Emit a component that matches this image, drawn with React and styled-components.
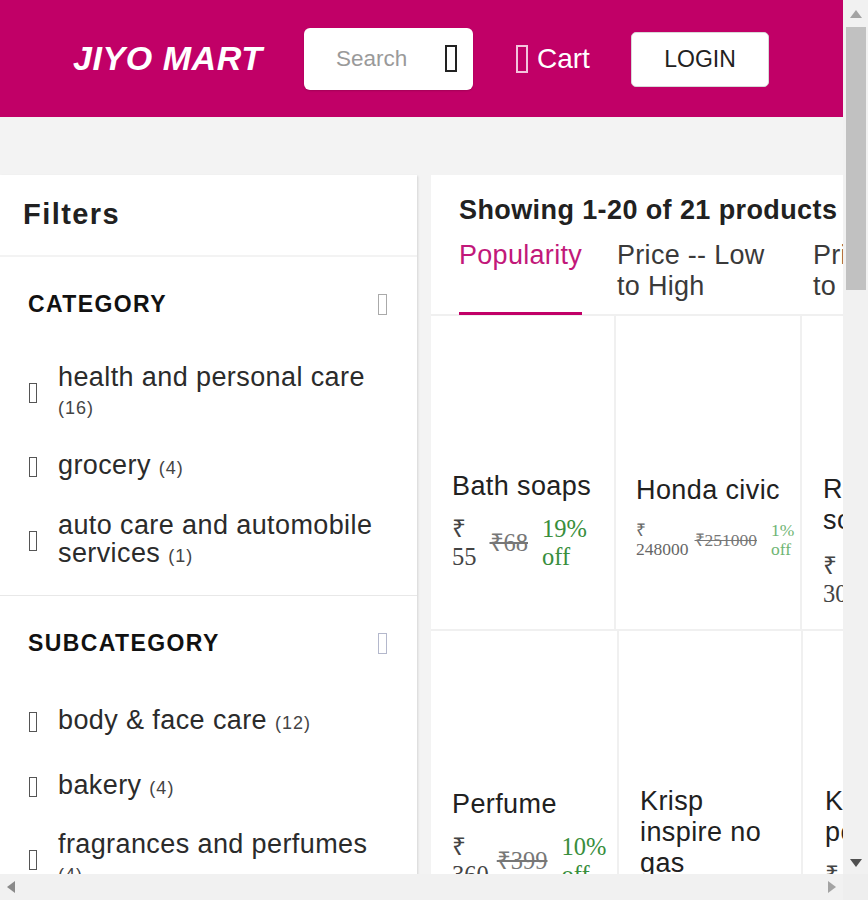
import React from "react";
import styled, { createGlobalStyle } from "styled-components";

const Global = createGlobalStyle`
  html, body { margin: 0; padding: 0; height: 100%; overflow: hidden; background: #f3f3f3; }
  * { box-sizing: border-box; }
  body { font-family: "Liberation Sans", Arial, sans-serif; color: #212121; }
`;

const Frame = styled.div`
  width: 868px; height: 900px;
  display: grid;
  grid-template-columns: 843px 25px;
  grid-template-rows: 874px 26px;
  overflow: hidden;
`;
const Viewport = styled.div`overflow: hidden; background: #f3f3f3;`;
const VBar = styled.div`
  background: #f1f1f1;
  display: flex; flex-direction: column; align-items: center;
  padding: 0 2px;
`;
const HBar = styled.div`
  background: #f1f1f1;
  display: flex; justify-content: space-between; align-items: center;
  padding: 0 7px;
`;
const Corner = styled.div`background: #eeeeee;`;
const Thumb = styled.div`
  width: 20px; height: 263px; background: #c1c1c1;
  margin-top: 9px;
`;
const ArrowBox = styled.svg`display: block; flex: none;`;
const ArrowSlot = styled.div`
  height: 18px; display: flex; align-items: flex-end; justify-content: center;
`;
const BottomSlot = styled.div`
  margin-top: auto; height: 22px; display: flex; align-items: center; justify-content: center;
`;

const Header = styled.header`
  height: 117px; background: #c10067;
  display: flex; align-items: center;
  padding: 0 0 0 73px;
`;
const Logo = styled.div`
  color: #fff; font-size: 34px; font-weight: 700; font-style: italic;
  letter-spacing: .55px;
  width: 231px; white-space: nowrap;
`;
const Search = styled.div`
  width: 169px; height: 62px; background: #fff; border-radius: 6px;
  display: flex; align-items: center; justify-content: space-between;
  padding: 0 16px 0 32px;
  margin-right: 43px;
  box-shadow: 0 1px 2px rgba(0,0,0,.15);
`;
const Placeholder = styled.span`color: #9a9a9a; font-size: 22.5px;`;
const Tofu = styled.span`
  display: block; flex: none;
  width: ${p => p.$w}px; height: ${p => p.$h}px;
  border: ${p => p.$b || 1}px solid ${p => p.$c};
`;
const CartLink = styled.div`
  display: flex; align-items: center; gap: 9px;
  color: #fff; font-size: 28px;
  width: 115px;
`;
const LoginButton = styled.div`
  width: 138px; height: 55px; background: #fff;
  border: 1px solid #d8d8d8; border-radius: 5px;
  display: flex; align-items: center; justify-content: center;
  font-size: 23px; color: #212121;
  margin-top: 1px;
`;

const Main = styled.div`
  display: flex; gap: 14px; padding-top: 58px;
  width: 1300px;
`;
const Sidebar = styled.aside`
  width: 417px; flex: none; height: 900px; background: #fff;
  box-shadow: 1px 1px 2px rgba(0,0,0,.12);
`;
const FilterTitle = styled.div`
  height: 82px; padding: 0 0 2px 23px;
  display: flex; align-items: center;
  font-size: 29px; font-weight: 700; letter-spacing: 1.45px;
  border-bottom: 2px solid #f3f3f3;
`;
const Section = styled.section`
  padding: 0 30px 0 28px;
  height: ${p => p.$h}px;
  border-bottom: 1px solid #e8e8e8;
`;
const SectionHead = styled.div`
  height: 94px;
  display: flex; align-items: center; justify-content: space-between;
  font-size: 23px; font-weight: 700; color: #111;
  letter-spacing: 1.4px;
`;
const Items = styled.div`
  display: flex; flex-direction: column; gap: 29px;
  padding: ${p => p.$top}px 0 0 1px;
`;
const Item = styled.div`
  display: flex; align-items: center; gap: 21px;
  margin-bottom: ${p => p.$extra || 0}px;
`;
const ItemText = styled.div`font-size: 27px; line-height: 28px; color: #2b2b2b; letter-spacing: .4px;`;
const Count = styled.span`font-size: 18px; color: #444; letter-spacing: 1px;`;

const Results = styled.div`width: 800px; flex: none; background: #fff;`;
const ResultsHead = styled.div`
  height: 141px; padding: 19px 0 0 28px;
  border-bottom: 2px solid #f0f0f0;
`;
const Showing = styled.div`
  font-size: 27px; font-weight: 700; line-height: 32px; color: #212121;
  letter-spacing: .4px; white-space: nowrap;
`;
const Tabs = styled.div`display: flex; gap: 35px; margin-top: 14px;`;
const Tab = styled.div`
  width: ${p => p.$w}px; height: 75px;
  font-size: 27px; line-height: 31px; letter-spacing: .3px;
  color: ${p => (p.$active ? "#c2187a" : "#3a3a3a")};
  border-bottom: 3px solid ${p => (p.$active ? "#c10067" : "transparent")};
`;
const Row = styled.div`
  display: flex; height: ${p => p.$h}px;
  border-bottom: 2px solid #f0f0f0;
`;
const Card = styled.div`
  width: ${p => p.$w}px; flex: none;
  padding: ${p => p.$top}px 6px 0 ${p => p.$left}px;
  border-right: 2px solid #f0f0f0;
`;
const Name = styled.div`
  font-size: 27px; line-height: 31px; color: #212121; letter-spacing: .4px;
`;
const Prices = styled.div`
  display: flex; align-items: center;
  margin-top: ${p => p.$mt}px;
  font-family: "Liberation Serif", "Times New Roman", serif;
  font-size: ${p => (p.$small ? 17.5 : 24.5)}px;
  line-height: ${p => (p.$small ? 19 : 28)}px;
`;
const Price = styled.span`
  width: min-content; color: ${p => (p.$small ? "#666" : "#444")};
  margin-right: ${p => p.$gap}px;
`;
const Old = styled.s`color: #777; white-space: nowrap; margin-right: 14px;`;
const Off = styled.span`width: min-content; color: ${p => (p.$small ? "#6fb573" : "#388e3c")};`;

const products = [
  [
    { w: 185, top: 155, left: 21, mt: 13, gap: 13, name: "Bath soaps", price: "₹ 55", old: "₹68", off: "19% off" },
    { w: 186, top: 159, left: 20, mt: 15, gap: 6, name: "Honda civic", price: "₹ 248000", old: "₹251000", off: "1% off", small: true },
    { w: 430, top: 158, left: 21, mt: 16, gap: 8, name: <>Rose<br />soap</>, price: "₹ 300" },
  ],
  [
    { w: 188, top: 158, left: 21, mt: 13, gap: 8, name: "Perfume", price: "₹ 360", old: "₹399", off: "10% off" },
    { w: 184, top: 155, left: 21, mt: 13, gap: 8, name: <>Krisp<br />inspire no<br />gas</>, price: "₹ 99" },
    { w: 430, top: 155, left: 22, mt: 13, gap: 8, name: <>Krisp<br />pods</>, price: "₹ 60" },
  ],
];

const Box = ({ w = 8, h = 20, c = "#555", b = 1 }) => <Tofu $w={w} $h={h} $c={c} $b={b} />;

const Check = ({ text, count, extra, tight }) => (
  <Item $extra={extra}>
    <Box />
    <ItemText>{text} <Count>({count})</Count></ItemText>
  </Item>
);

export default function App() {
  return (
    <>
      <Global />
      <Frame>
        <Viewport>
          <Header>
            <Logo>JIYO MART</Logo>
            <Search>
              <Placeholder>Search</Placeholder>
              <Box w={12} h={27} c="#222" b={2} />
            </Search>
            <CartLink><Box w={12} h={28} c="#f3c4dc" b={2} />Cart</CartLink>
            <LoginButton>LOGIN</LoginButton>
          </Header>
          <Main>
            <Sidebar>
              <FilterTitle>Filters</FilterTitle>
              <Section $h={339}>
                <SectionHead>CATEGORY<Box w={9} h={21} c="#aaa" /></SectionHead>
                <Items $top={12}>
                  <Check text="health and personal care" count="16" />
                  <Check text="grocery" count="4" />
                  <Check text="auto care and automobile services" count="1" />
                </Items>
              </Section>
              <Section $h={400}>
                <SectionHead>SUBCATEGORY<Box w={9} h={21} c="#b4b8cc" /></SectionHead>
                <Items $top={16}>
                  <Check text="body & face care" count="12" extra={5} />
                  <Check text="bakery" count="4" extra={-1} />
                  <Check text="fragrances and perfumes" count="4" />
                </Items>
              </Section>
            </Sidebar>
            <Results>
              <ResultsHead>
                <Showing>Showing 1-20 of 21 products</Showing>
                <Tabs>
                  <Tab $w={123} $active>Popularity</Tab>
                  <Tab $w={161}>Price -- Low to High</Tab>
                  <Tab $w={161}>Price -- High to Low</Tab>
                </Tabs>
              </ResultsHead>
              {products.map((row, i) => (
                <Row key={i} $h={i === 0 ? 315 : 320}>
                  {row.map((p, j) => (
                    <Card key={j} $w={p.w} $top={p.top} $left={p.left}>
                      <Name>{p.name}</Name>
                      <Prices $small={p.small} $mt={p.mt}>
                        <Price $small={p.small} $gap={p.gap}>{p.price}</Price>
                        {p.old && <Old>{p.old}</Old>}
                        {p.off && <Off $small={p.small}>{p.off}</Off>}
                      </Prices>
                    </Card>
                  ))}
                </Row>
              ))}
            </Results>
          </Main>
        </Viewport>
        <VBar>
          <ArrowSlot>
            <ArrowBox width="14" height="8" viewBox="0 0 14 8"><polygon points="7,0 13,8 1,8" fill="#a3a3a3" /></ArrowBox>
          </ArrowSlot>
          <Thumb />
          <BottomSlot>
            <ArrowBox width="14" height="8" viewBox="0 0 14 8"><polygon points="1,0 13,0 7,8" fill="#505050" /></ArrowBox>
          </BottomSlot>
        </VBar>
        <HBar>
          <ArrowBox width="8" height="14" viewBox="0 0 8 14"><polygon points="8,1 8,13 0,7" fill="#8a8a8a" /></ArrowBox>
          <ArrowBox width="8" height="14" viewBox="0 0 8 14"><polygon points="0,1 0,13 8,7" fill="#a3a3a3" /></ArrowBox>
        </HBar>
        <Corner />
      </Frame>
    </>
  );
}
